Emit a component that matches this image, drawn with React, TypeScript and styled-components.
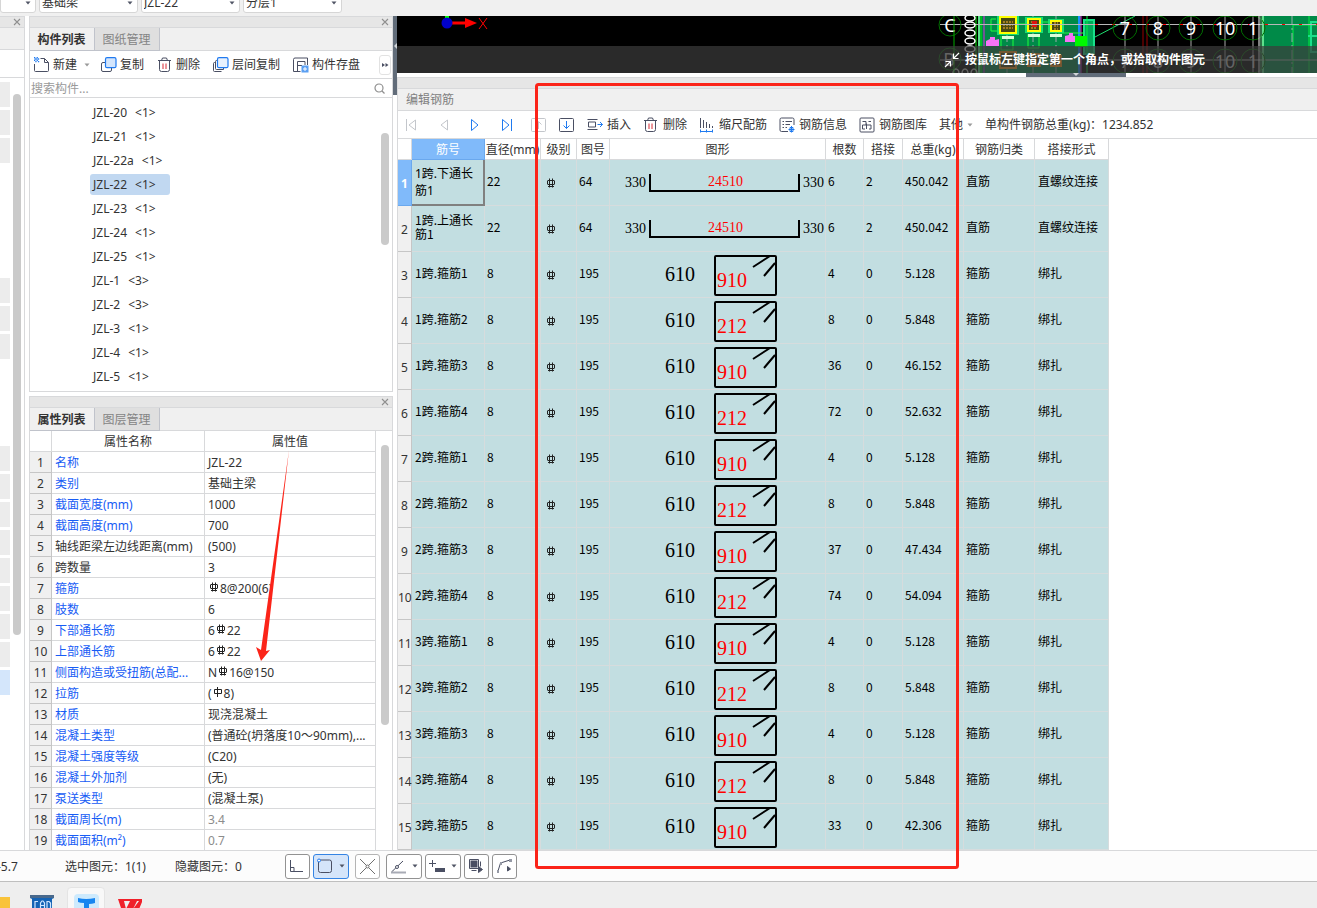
import React from "react";
import styled, { createGlobalStyle, css } from "styled-components";

const UI = `"Noto Sans", "Noto Sans CJK SC", sans-serif`;
const CJK = `"Noto Sans CJK SC", sans-serif`;
const INK = "#4a4f63";
const BLUE = "#1f7af0";
const LINE = "#d8d9db";

const GlobalStyle = createGlobalStyle`
  *, *::before, *::after { box-sizing: border-box; }
  body { margin: 0; background: #fff; color: #333; font: 12px/16px ${UI}; }
  button, input, select { font: inherit; color: inherit; }
  svg { display: block; flex: none; }
`;

const Page = styled.div`
  position: relative;
  display: flex;
  flex-direction: column;
  min-height: 100vh;
  overflow: hidden;
`;

/* ---------- top selectors ---------- */

const TopBar = styled.header`
  display: flex;
  align-items: flex-end;
  gap: 3px;
  height: 16px;
  padding-bottom: 3px;
  background: #f0f0f0;
  overflow: hidden;
`;

const Combo = styled.label<{ $width: number }>`
  display: flex;
  align-items: center;
  flex: none;
  width: ${(p) => p.$width}px;
  height: 22px;
  padding: 2px 4px 0 0;
  background: #fff;
  border: 1px solid #d6d6d6;
  border-radius: 3px;
`;

const ComboSelect = styled.select`
  appearance: none;
  flex: 1;
  min-width: 0;
  height: 20px;
  padding: 0 0 0 2px;
  border: 0;
  background: none;
  line-height: 20px;
`;

/* ---------- main columns ---------- */

const Main = styled.main`
  display: flex;
  align-items: stretch;
  flex: 1;
`;

const Strip = styled.aside`
  display: flex;
  flex-direction: column;
  flex: none;
  width: 25px;
  border-right: 1px solid ${LINE};
`;

const StripHead = styled.div<{ $tall?: boolean }>`
  height: ${(p) => (p.$tall ? 28 : 22)}px;
  background: ${(p) => (p.$tall ? "#fff" : "#f0f0f0")};
  border-bottom: 1px solid ${LINE};
`;

const StripBody = styled.div`
  display: flex;
  justify-content: space-between;
  padding: 4px 3px 0 0;
`;

const StripList = styled.div`
  display: flex;
  flex-direction: column;
  gap: 3px;
`;

const StripItem = styled.div<{ $kind: number }>`
  width: 10px;
  height: 25px;
  background: ${(p) => ["transparent", "#ececec", "#d4e6fb"][p.$kind]};
`;

const Thumb = styled.div<{ $top: number; $length: number }>`
  flex: none;
  width: 8px;
  height: ${(p) => p.$length}px;
  margin-top: ${(p) => p.$top}px;
  border-radius: 4px;
  background: #cacaca;
`;

const Sidebar = styled.div`
  display: flex;
  flex-direction: column;
  gap: 4px;
  flex: none;
  width: 364px;
  margin-left: 4px;
`;

const Panel = styled.section<{ $closed?: boolean }>`
  display: flex;
  flex-direction: column;
  border: 1px solid ${LINE};
  border-top: 0;
  border-bottom-width: ${(p) => (p.$closed ? 1 : 0)}px;
`;

const Caption = styled.div`
  display: flex;
  align-items: center;
  justify-content: flex-end;
  height: 12px;
  padding-right: 3px;
  background: #e6e6e6;
  border-top: 1px solid ${LINE};
  border-bottom: 1px solid ${LINE};
`;

const CloseButton = styled.button`
  padding: 0;
  border: 0;
  background: none;
`;

const Tabs = styled.div`
  display: flex;
  height: 23px;
  background: #f0f0f0;
  border-bottom: 1px solid ${LINE};
`;

const Tab = styled.button<{ $active?: boolean }>`
  width: 65px;
  height: 23px;
  padding: 2px 1px 0 0;
  border: 1px solid #c0c3cb;
  border-left-width: ${(p) => (p.$active ? 0 : 0)}px;
  border-top: 0;
  background: ${(p) => (p.$active ? "#f0f0f0" : "#dfdfdf")};
  color: ${(p) => (p.$active ? "#333" : "#848484")};
  font-weight: ${(p) => (p.$active ? 700 : 400)};
`;

const ListTools = styled.div`
  display: flex;
  align-items: center;
  gap: 13px;
  height: 28px;
  padding: 1px 0 0 4px;
  border-bottom: 1px solid ${LINE};
`;

const Tool = styled.button<{ $gap: number }>`
  display: flex;
  align-items: center;
  gap: ${(p) => p.$gap}px;
  flex: none;
  padding: 0;
  border: 0;
  background: none;
  line-height: 20px;
  white-space: nowrap;
`;

const NewGroup = styled.div`
  display: flex;
  align-items: center;
  gap: 7px;
  margin-right: -2px;
`;

const More = styled.button`
  display: flex;
  align-items: center;
  justify-content: center;
  flex: none;
  width: 12px;
  height: 20px;
  margin: 0 1px 0 auto;
  padding: 0;
  border: 1px solid #e2e2e2;
  border-radius: 3px;
  background: #fff;
`;

const SearchRow = styled.label`
  display: flex;
  align-items: center;
  height: 19px;
  padding: 0 7px 0 1px;
  border-bottom: 1px solid ${LINE};
`;

const SearchInput = styled.input`
  flex: 1;
  min-width: 0;
  height: 18px;
  padding: 0;
  border: 0;
  outline: 0;
  background: none;
  &::placeholder { color: #9a9a9a; opacity: 1; }
`;

const ListBody = styled.div`
  display: flex;
  justify-content: space-between;
  height: 293px;
  padding-right: 3px;
`;

const ComponentList = styled.ul`
  display: flex;
  flex-direction: column;
  gap: 3px;
  margin: 0;
  padding: 4px 0 0 60px;
  list-style: none;
`;

const ComponentItem = styled.button<{ $selected: boolean }>`
  display: flex;
  gap: 8px;
  min-width: 80px;
  height: 21px;
  padding: 0 3px;
  border: 0;
  border-radius: 3px;
  background: ${(p) => (p.$selected ? "#c1d8f1" : "transparent")};
  line-height: 21px;
  white-space: nowrap;
`;

/* ---------- properties ---------- */

const PropBody = styled.div`
  display: flex;
  justify-content: space-between;
  padding-right: 3px;
`;

const PropTable = styled.table`
  width: 346px;
  table-layout: fixed;
  border-collapse: separate;
  border-spacing: 0;
  th, td {
    height: 21px;
    padding: 2px 3px 0;
    border-right: 1px solid ${LINE};
    border-bottom: 1px solid ${LINE};
    font-weight: 400;
    line-height: 18px;
    text-align: left;
    white-space: nowrap;
    overflow: hidden;
  }
  thead th { text-align: center; }
  tbody tr:last-child > * { height: 20px; border-bottom: 0; }
`;

const PropIndex = styled.th`
  && { padding: 2px 0 0; background: #f0f0f0; border-color: #c6c6c6; text-align: center; }
`;

const PropName = styled.td<{ $plain?: boolean }>`
  color: ${(p) => (p.$plain ? "#333" : "#175cf5")};
`;

const PropValue = styled.td<{ $muted?: boolean }>`
  color: ${(p) => (p.$muted ? "#8c8c8c" : "#333")};
`;

const ValueLine = styled.span`
  display: flex;
  align-items: center;
  svg { margin: 0 1px 4px; }
`;

/* ---------- work area ---------- */

const Splitter = styled.div`
  flex: none;
  width: 4px;
`;

const SplitterGrip = styled.div`
  display: flex;
  align-items: center;
  height: 79px;
  padding-bottom: 20px;
  background: #616c79;
`;

const Work = styled.div`
  display: flex;
  flex-direction: column;
  flex: 1;
  min-width: 0;
`;

const Canvas = styled.div`
  position: relative;
  height: 57px;
  background: #000;
  overflow: hidden;
`;

const Hint = styled.div`
  position: absolute;
  inset: 30px 0 0 0;
  display: flex;
  align-items: center;
  gap: 5px;
  padding: 1px 0 0 547px;
  background: rgba(59, 59, 59, 0.71);
  color: #fff;
  font-weight: 700;
  white-space: nowrap;
`;

const Shelf = styled.div`
  height: 4px;
  padding-left: 629px;
`;

const ShelfGrip = styled.div`
  display: flex;
  justify-content: center;
  width: 100px;
  height: 4px;
  background: #616c79;
`;

const Editor = styled.section`
  flex: 1;
  border-left: 1px solid ${LINE};
`;

const EditorTitle = styled.h2`
  margin: 0;
  height: 22px;
  padding-left: 8px;
  background: #f0f0f0;
  border-bottom: 1px solid ${LINE};
  color: #808080;
  font-size: 12px;
  font-weight: 400;
  line-height: 22px;
`;

const EditorTools = styled.div`
  display: flex;
  align-items: center;
  gap: 12px;
  height: 28px;
  padding: 1px 0 0 5px;
  border-bottom: 1px solid ${LINE};
  white-space: nowrap;
`;

const NavGroup = styled.div`
  display: flex;
  gap: 16px;
  margin-right: 4px;
`;

const BarTable = styled.table`
  width: 711px;
  table-layout: fixed;
  border-collapse: separate;
  border-spacing: 0;
  color: #000;
`;

const HeadCell = styled.th<{ $current?: boolean }>`
  height: 21px;
  padding: 2px 0 0;
  border-right: 1px solid ${LINE};
  border-bottom: 1px solid ${LINE};
  background: #fff;
  color: #333;
  font-weight: 400;
  line-height: 18px;
  text-align: center;
  white-space: nowrap;
  ${(p) =>
    p.$current &&
    css`
      background: #80bafa;
      border-color: #6aa8ee;
      color: #fff;
    `}
`;

const RowHead = styled.th<{ $current?: boolean }>`
  height: 46px;
  padding: 2px 0 0;
  border-right: 1px solid #c6c6c6;
  border-bottom: 1px solid #c6c6c6;
  background: #f0f0f0;
  color: #333;
  font-weight: 400;
  text-align: center;
  white-space: nowrap;
  ${(p) =>
    p.$current &&
    css`
      background: #80bafa;
      border-color: #6aa8ee;
      color: #fff;
      font-weight: 700;
    `}
`;

const Cell = styled.td<{ $pad?: number; $current?: boolean }>`
  height: 46px;
  padding: 0 0 3px ${(p) => p.$pad ?? 2}px;
  border-right: 1px solid #d6dcdd;
  border-bottom: 1px solid #d6dcdd;
  background: #c2dee1;
  font-family: ${CJK};
  line-height: 14px;
  ${(p) =>
    p.$current &&
    css`
      border-right: 2px solid #808080;
      border-bottom: 2px solid #808080;
      padding-bottom: 1px;
      font-family: ${UI};
      line-height: 17px;
    `}
`;

const ShapeCell = styled(Cell)`
  padding: 0;
`;

const MarkCell = styled(Cell)`
  padding: 0 0 0 5px;
`;

const ShapeText = styled.text<{ $size: number; $red?: boolean }>`
  font-family: "Liberation Serif", serif;
  font-size: ${(p) => p.$size}px;
  fill: ${(p) => (p.$red ? "#f00" : "#000")};
`;

/* ---------- status and task bars ---------- */

const StatusBar = styled.footer`
  display: flex;
  align-items: center;
  height: 32px;
  background: #fcfcfc;
  border-top: 1px solid ${LINE};
  border-bottom: 1px solid #bfbfbf;
`;

const StatusText = styled.span<{ $width: number }>`
  flex: none;
  width: ${(p) => p.$width}px;
  padding-top: 2px;
  white-space: nowrap;
`;

const Coordinate = styled(StatusText)`
  margin-left: -3px;
`;

const StatusGroup = styled.div`
  display: flex;
  gap: 3px;
  margin-right: 6px;
`;

const StatusButton = styled.button<{ $wide?: boolean; $active?: boolean; $faint?: boolean }>`
  display: flex;
  align-items: center;
  justify-content: space-between;
  width: ${(p) => (p.$wide ? 36 : 25)}px;
  height: 25px;
  padding: 0 3px;
  border: 1px solid ${(p) => (p.$active ? "#3584e4" : p.$faint ? "#b4b4b4" : "#929292")};
  border-radius: 3px;
  background: ${(p) => (p.$active ? "#d5e5fa" : "#fff")};
`;

const TaskBar = styled.nav`
  display: flex;
  height: 26px;
  background: #eeeeee;
  overflow: hidden;
`;

const TaskItem = styled.button<{ $width: number; $active?: boolean }>`
  display: flex;
  align-items: flex-start;
  flex: none;
  width: ${(p) => p.$width}px;
  height: 40px;
  margin-top: 5px;
  padding: 0;
  border: ${(p) => (p.$active ? "1px solid #e4e4e4" : "0")};
  border-radius: 4px;
  background: ${(p) => (p.$active ? "#f8f8f8" : "none")};
`;

const CadLabel = styled.text<{ $dim?: boolean }>`
  font-family: "Noto Sans", sans-serif;
  font-size: 18px;
  text-anchor: middle;
  fill: ${(p) => (p.$dim ? "#c8c8c8" : "#fff")};
`;

const Notes = styled.svg`
  position: absolute;
  left: 0;
  top: 0;
  pointer-events: none;
`;

/* ---------- icons ---------- */

const Caret = ({ color = "#505565" }: { color?: string }) => (
  <svg width="6" height="4" viewBox="0 0 6 4">
    <path d="M0.5 0.5h5L3 3.5z" fill={color} />
  </svg>
);

const CloseIcon = () => (
  <svg width="8" height="8" viewBox="0 0 8 8">
    <path d="M1 1l6 6M7 1L1 7" stroke="#8f8f8f" strokeWidth="1.1" />
  </svg>
);

type IconName =
  | "new" | "copy" | "trash" | "layerCopy" | "save"
  | "first" | "prev" | "next" | "last" | "up" | "down"
  | "insert" | "scale" | "info" | "library";

const glyphs: Record<IconName, React.ReactNode> = {
  new: (
    <>
      <path d="M6.500 1.500h4l4 4v8a1 1 0 0 1-1 1h-12a1 1 0 0 1-1-1V7" />
      <path d="M10.500 1.500v4h4" />
      <path d="M0 .7h1.300M2.600 .7h1.300M1.300 2h1.300M3.900 2h1.300M0 3.300h1.300M2.600 3.300h1.300M1.300 4.600h1.300M3.900 4.600h1.300" stroke={BLUE} strokeWidth="1.400" />
    </>
  ),
  copy: (
    <>
      <path d="M4.500 5.500H2A1.500 1.500 0 0 0 .5 7v6A1.500 1.500 0 0 0 2 14.500h7a1.500 1.500 0 0 0 1.500-1.500v-2" />
      <rect x="4.500" y=".7" width="10.500" height="10" rx="1.500" fill="#d3e5fc" stroke={BLUE} strokeWidth="1.200" />
    </>
  ),
  trash: (
    <>
      <path d="M1 3.500h13M4.500 3.500l1-2.500h4l1 2.500M2.500 4v8.500a2 2 0 0 0 2 2h6a2 2 0 0 0 2-2V4" />
      <path d="M6 6.500v5.500M9 6.500v5.500" stroke="#d82b35" />
    </>
  ),
  layerCopy: (
    <>
      <path d="M2.500 5.500H1.500a1 1 0 0 0-1 1v7a1 1 0 0 0 1 1h7M4.500 3.500h-1a1 1 0 0 0-1 1v7a1 1 0 0 0 1 1h7v-1.500" />
      <rect x="4.500" y=".7" width="10.500" height="10" rx="1.500" fill="#e8f1fd" stroke={BLUE} strokeWidth="1.200" />
    </>
  ),
  save: (
    <>
      <path d="M7.500 14.500H.5V2.500A1.500 1.500 0 0 1 2 1h12.500v7M4.500 14V4.500H12V8M4.500 8.500H9" />
      <rect x="8.500" y="8.500" width="7" height="7" fill="#5b9ff2" stroke="none" />
      <path d="M12 10v4M10 12h4" stroke="#fff" />
    </>
  ),
  first: <path d="M3.500 2v12M12.500 3v10L6 8z" stroke="#c3c6cb" />,
  prev: <path d="M12.500 3v10L6 8z" stroke="#c3c6cb" />,
  next: <path d="M4.500 2.500v11L11 8z" stroke={BLUE} />,
  last: <path d="M3.500 2.500v11L10 8zM12.500 2v12" stroke={BLUE} />,
  up: (
    <>
      <rect x=".5" y="1.500" width="14" height="13" rx="1" stroke="#c3c6cb" />
      <path d="M7.500 12V5M4.500 7.500l3-3 3 3" stroke="#c3c6cb" />
    </>
  ),
  down: (
    <>
      <rect x=".5" y="1.500" width="14" height="13" rx="1" />
      <path d="M7.500 4v7.500M4.500 8.500l3 3 3-3" stroke={BLUE} />
    </>
  ),
  insert: (
    <>
      <path d="M.5 2.500h10M.5 12.500h10M1.500 5h7v5h-7z" />
      <path d="M10.500 7.500h5M13 5l2.500 2.500L13 10" stroke={BLUE} />
    </>
  ),
  scale: (
    <>
      <path d="M1.500 1v10M4.500 3v8M7.500 5v6M10.500 7v4M13.500 9v2" />
      <path d="M1 14.500h13M1.500 12.500v3M7.500 12.500v3M13.500 12.500v3" stroke={BLUE} />
    </>
  ),
  info: (
    <>
      <path d="M9 14.500H2.500a1.500 1.500 0 0 1-1.500-1.500V2.500A1.500 1.500 0 0 1 2.500 1h11A1.500 1.500 0 0 1 15 2.500V8M3.500 4.500H5M6.500 4.500H13M3.500 7.500H5M6.500 7.500H11M3.500 10.500H5M6.500 10.500H8" />
      <path d="M12.500 9v6.500M9.500 12.500h6M11 10.500h3v4h-3z" stroke={BLUE} />
    </>
  ),
  library: (
    <>
      <rect x="1" y="1" width="14" height="14" rx="1" />
      <path d="M3.500 4.500H7v3.500H3.500v4H6M7.500 12V6.500M7.500 8h4.500v4h-2M9.500 4.500H12" />
    </>
  ),
};

const Icon = ({ name }: { name: IconName }) => (
  <svg width="16" height="16" viewBox="0 0 16 16" fill="none" stroke={INK} strokeWidth="1">
    {glyphs[name]}
  </svg>
);

/* Steel grade mark: a ring crossed by uprights, with a base bar for ribbed steel. */
const GradeMark = ({ plain }: { plain?: boolean }) => (
  <svg width="10" height="10" viewBox="0 0 10 10" fill="none" stroke="#222" strokeWidth="1">
    {plain ? (
      <path d="M1.500 2.500h7v4h-7zM4.500 0v10" />
    ) : (
      <path d="M2 2.500h6M1.500 2.500v4M8.500 2.500v4M2 6.500h6M3.500 .5v9M6.500 .5v9M2 8.500h6" />
    )}
  </svg>
);

/* ---------- data ---------- */

const stripRows = [1, 1, 1, 0, 0, 0, 0, 1, 1, 1, 0, 0, 0, 1, 1, 1, 1, 1, 1, 1, 1, 2];

const components: [string, number][] = [
  ["JZL-20", 1], ["JZL-21", 1], ["JZL-22a", 1], ["JZL-22", 1], ["JZL-23", 1], ["JZL-24", 1],
  ["JZL-25", 1], ["JZL-1", 3], ["JZL-2", 3], ["JZL-3", 1], ["JZL-4", 1], ["JZL-5", 1],
];

type Prop = { name: string; value: React.ReactNode; plain?: boolean; muted?: boolean };

const props: Prop[] = [
  { name: "名称", value: "JZL-22" },
  { name: "类别", value: "基础主梁" },
  { name: "截面宽度(mm)", value: "1000" },
  { name: "截面高度(mm)", value: "700" },
  { name: "轴线距梁左边线距离(mm)", value: "(500)", plain: true },
  { name: "跨数量", value: "3", plain: true },
  { name: "箍筋", value: <><GradeMark />8@200(6)</> },
  { name: "肢数", value: "6" },
  { name: "下部通长筋", value: <>6<GradeMark />22</> },
  { name: "上部通长筋", value: <>6<GradeMark />22</> },
  { name: "侧面构造或受扭筋(总配...", value: <>N<GradeMark />16@150</> },
  { name: "拉筋", value: <>(<GradeMark plain />8)</> },
  { name: "材质", value: "现浇混凝土" },
  { name: "混凝土类型", value: "(普通砼(坍落度10～90mm),..." },
  { name: "混凝土强度等级", value: "(C20)" },
  { name: "混凝土外加剂", value: "(无)" },
  { name: "泵送类型", value: "(混凝土泵)" },
  { name: "截面周长(m)", value: "3.4", muted: true },
  { name: "截面面积(m²)", value: "0.7", muted: true },
];

type Bar = { name: string; dia: string; no: string; size: string; count: string; lap: string; weight: string };

const mainBar = (name: string): Bar => ({
  name, dia: "22", no: "64", size: "24510", count: "6", lap: "2", weight: "450.042",
});
const stirrup = (name: string, size: string, count: string, weight: string): Bar => ({
  name, dia: "8", no: "195", size, count, lap: "0", weight,
});

const bars: Bar[] = [
  mainBar("1跨.下通长筋1"),
  mainBar("1跨.上通长筋1"),
  stirrup("1跨.箍筋1", "910", "4", "5.128"),
  stirrup("1跨.箍筋2", "212", "8", "5.848"),
  stirrup("1跨.箍筋3", "910", "36", "46.152"),
  stirrup("1跨.箍筋4", "212", "72", "52.632"),
  stirrup("2跨.箍筋1", "910", "4", "5.128"),
  stirrup("2跨.箍筋2", "212", "8", "5.848"),
  stirrup("2跨.箍筋3", "910", "37", "47.434"),
  stirrup("2跨.箍筋4", "212", "74", "54.094"),
  stirrup("3跨.箍筋1", "910", "4", "5.128"),
  stirrup("3跨.箍筋2", "212", "8", "5.848"),
  stirrup("3跨.箍筋3", "910", "4", "5.128"),
  stirrup("3跨.箍筋4", "212", "8", "5.848"),
  stirrup("3跨.箍筋5", "910", "33", "42.306"),
];

const columns = ["直径(mm)", "级别", "图号", "图形", "根数", "搭接", "总重(kg)", "钢筋归类", "搭接形式"];
const columnWidths = [14, 73, 56, 36, 33, 216, 38, 39, 61, 71, 74];

/* ---------- drawings ---------- */

const StraightShape = ({ size }: { size: string }) => (
  <svg width="215" height="45" viewBox="0 0 215 45">
    <path d="M40 14v17h149V14" fill="none" stroke="#000" strokeWidth="2" />
    <ShapeText $size={14} x="15" y="27">330</ShapeText>
    <ShapeText $size={14} x="193" y="27">330</ShapeText>
    <ShapeText $size={14} $red x="98" y="26">{size}</ShapeText>
  </svg>
);

const StirrupShape = ({ size }: { size: string }) => (
  <svg width="215" height="45" viewBox="0 0 215 45">
    <rect x="105" y="4" width="61" height="39" rx="1" fill="none" stroke="#000" strokeWidth="2" />
    <path d="M143 15l17-11M154 24l11-13" stroke="#000" strokeWidth="2" />
    <ShapeText $size={20} x="55" y="29">610</ShapeText>
    <ShapeText $size={20} $red x="107" y="35">{size}</ShapeText>
  </svg>
);

const axes = [
  { x: 1125, label: "7" }, { x: 1158, label: "8" }, { x: 1191, label: "9" }, { x: 1225, label: "10" }, { x: 1253, label: "1" },
];

const Plan = () => (
  <svg width="920" height="57" viewBox="397 16 920 57" fill="none">
    <path d="M447 12v6" stroke="#0f0" strokeWidth="4" />
    <path d="M450 23h18" stroke="#f00" strokeWidth="3" />
    <path d="M465 18l12 5-12 5z" fill="#f00" />
    <circle cx="447" cy="23" r="5.500" fill="#00c" />
    <path d="M479 18l8 11M487 18l-8 11" stroke="#f00" />

    <rect x="978" y="16" width="103" height="57" fill="#008a48" />
    <rect x="1262" y="16" width="55" height="57" fill="#008a48" />
    <path d="M976 16v57M981 16v57" stroke="#0e0" strokeWidth="1" />
    <path d="M979 16v57M1263 16v57" stroke="#5ee08c" strokeWidth="2" />
    <path d="M984 16v57M1081 16v57" stroke="#e020e0" />
    <path d="M1079 16v57" stroke="#1890ff" strokeWidth="2" />
    <path d="M1084 20h10v34h-10z" fill="#00a858" stroke="#19e08a" strokeWidth="2" />
    <path d="M1087 16v57M1317 25h-24v48M1309 16v57" stroke="#00f040" />
    <path d="M1308 36h9M1311 22h7v30h-7z" stroke="#19e08a" strokeWidth="2" />
    <path d="M1143 16v57M1147 16v57" stroke="#900" />
    <path d="M1095 37l40-21" stroke="#1ee070" />
    <path d="M1007 16v57M1033 16v57M1056 16v57M1292 16v57" stroke="#9aa" strokeDasharray="9 3 2 3" />
    <path d="M991 24v-5h5M991 24v7h13M1018 24h8v8M1042 22h8v9M1058 33h26M1001 36v14h12V36M1028 34v14h11V34M996 60h60" stroke="#1eff3c" />

    {[[1008, 25, 8], [1034, 25, 6], [1056, 26, 5]].map(([x, y, r]) => (
      <g key={x}>
        <rect x={x - r - 3} y={y - r - 2} width={2 * r + 6} height={2 * r + 4} fill="#19e070" />
        <rect x={x - r} y={y - r} width={2 * r} height={2 * r} fill="#494a12" stroke="#ff0" strokeWidth="2" />
        <path d={`M${x - r + 3} ${y - 3}h${2 * r - 6}M${x - r + 3} ${y}h${2 * r - 6}M${x - r + 3} ${y + 3}h${2 * r - 6}`} stroke="#ffb030" strokeDasharray="2 1" />
        <rect x={x - 6} y={y + r + 3} width="12" height="3" fill="#d8ffd8" />
        <rect x={x - r} y={y + 35 - r} width={2 * r} height={2 * r} fill="#494a12" stroke="#ff9a1e" strokeWidth="2" />
      </g>
    ))}
    <path d="M1032 21h5v6h-5z" fill="#e01010" />
    <path d="M986 46v-5l4-2v-2h5v3l4-1v7zM1065 42v-6l4-1v-2h4v3h5v6z" fill="#f573f5" />
    <path d="M1075 36h12v11h-12z" fill="#00f800" />

    <path d="M940 24.500h377M1088 60h229M940 60h40" stroke="#b8b8b8" />
    <path d="M1095 24.500h222" stroke="#f00" strokeDasharray="3 14" />
    {axes.map((a) => (
      <g key={a.x}>
        <path d={`M${a.x} 16v57`} stroke="#a8a8a8" />
        <circle cx={a.x} cy="28" r="12" stroke="#006c00" />
        <circle cx={a.x} cy="61" r="12" stroke="#006c00" />
        <CadLabel x={a.x} y="35">{a.label}</CadLabel>
        <CadLabel $dim x={a.x} y="68">{a.label}</CadLabel>
      </g>
    ))}
    <path d="M1259 16v57" stroke="#fff" />
    <path d="M1261 16v57" stroke="#5ee08c" />
    <circle cx="950" cy="25" r="11" stroke="#006c00" />
    <circle cx="950" cy="59" r="11" stroke="#006c00" />
    <CadLabel x="950" y="32">C</CadLabel>
    <CadLabel $dim x="949" y="66">B</CadLabel>
    {[18, 25, 33, 41, 49].map((y) => (
      <ellipse key={y} cx="970" cy={y} rx="5" ry="3" stroke="#fff" strokeWidth="1.500" />
    ))}
    {[956, 965, 974].map((x) => (
      <ellipse key={x} cx={x} cy="74" rx="3" ry="5" stroke="#c8c8c8" strokeWidth="1.500" />
    ))}
    <path d="M954 16v57" stroke="#0a0" />
  </svg>
);

/* ---------- page ---------- */

const EDITOR_GAP = 4;
const LIST_GAP = 3;

export default function App() {
  return (
    <>
      <GlobalStyle />
      <Page>
        <TopBar>
          {[["", 36], ["基础梁", 99], ["JZL-22", 99], ["分层1", 99]].map(([text, width]) => (
            <Combo key={text} $width={width as number}>
              <ComboSelect aria-label={(text as string) || "楼层"}>
                <option>{text}</option>
              </ComboSelect>
              <Caret />
            </Combo>
          ))}
        </TopBar>

        <Main>
          <Strip>
            <Caption>
              <CloseButton aria-label="关闭"><CloseIcon /></CloseButton>
            </Caption>
            <StripHead />
            <StripHead $tall />
            <StripBody>
              <StripList>
                {stripRows.map((kind, i) => <StripItem key={i} $kind={kind} />)}
              </StripList>
              <Thumb $top={12} $length={541} />
            </StripBody>
          </Strip>

          <Sidebar>
            <Panel $closed>
              <Caption>
                <CloseButton aria-label="关闭"><CloseIcon /></CloseButton>
              </Caption>
              <Tabs role="tablist">
                <Tab role="tab" aria-selected $active>构件列表</Tab>
                <Tab role="tab" aria-selected={false}>图纸管理</Tab>
              </Tabs>
              <ListTools>
                <NewGroup>
                  <Tool $gap={LIST_GAP}><Icon name="new" />新建</Tool>
                  <Caret color="#9a9a9a" />
                </NewGroup>
                <Tool $gap={LIST_GAP}><Icon name="copy" />复制</Tool>
                <Tool $gap={LIST_GAP}><Icon name="trash" />删除</Tool>
                <Tool $gap={LIST_GAP}><Icon name="layerCopy" />层间复制</Tool>
                <Tool $gap={LIST_GAP}><Icon name="save" />构件存盘</Tool>
                <More aria-label="更多">
                  <svg width="8" height="6" viewBox="0 0 8 6" fill="#4a4f63">
                    <path d="M1 1l3 2-3 2zM4.500 1l3 2-3 2z" />
                  </svg>
                </More>
              </ListTools>
              <SearchRow>
                <SearchInput type="text" placeholder="搜索构件..." aria-label="搜索构件" />
                <svg width="11" height="11" viewBox="0 0 11 11" fill="none" stroke="#8f8f8f" strokeWidth="1.200">
                  <circle cx="5" cy="5" r="4" />
                  <path d="M8 8l2.500 2.500" />
                </svg>
              </SearchRow>
              <ListBody>
                <ComponentList>
                  {components.map(([name, count]) => (
                    <li key={name}>
                      <ComponentItem $selected={name === "JZL-22"}>
                        <span>{name}</span>
                        <span>{`<${count}>`}</span>
                      </ComponentItem>
                    </li>
                  ))}
                </ComponentList>
                <Thumb $top={35} $length={112} />
              </ListBody>
            </Panel>

            <Panel>
              <Caption>
                <CloseButton aria-label="关闭"><CloseIcon /></CloseButton>
              </Caption>
              <Tabs role="tablist">
                <Tab role="tab" aria-selected $active>属性列表</Tab>
                <Tab role="tab" aria-selected={false}>图层管理</Tab>
              </Tabs>
              <PropBody>
                <PropTable>
                  <colgroup>
                    <col style={{ width: 22 }} />
                    <col style={{ width: 153 }} />
                    <col />
                  </colgroup>
                  <thead>
                    <tr><th /><th>属性名称</th><th>属性值</th></tr>
                  </thead>
                  <tbody>
                    {props.map((p, i) => (
                      <tr key={p.name}>
                        <PropIndex scope="row">{i + 1}</PropIndex>
                        <PropName $plain={p.plain}>{p.name}</PropName>
                        <PropValue $muted={p.muted}><ValueLine>{p.value}</ValueLine></PropValue>
                      </tr>
                    ))}
                  </tbody>
                </PropTable>
                <Thumb $top={14} $length={280} />
              </PropBody>
            </Panel>
          </Sidebar>

          <Splitter>
            <SplitterGrip>
              <svg width="4" height="6" viewBox="0 0 4 6"><path d="M4 0v6L1 3z" fill="#d0d4d8" /></svg>
            </SplitterGrip>
          </Splitter>

          <Work>
            <Canvas>
              <Plan />
              <Hint>
                <svg width="16" height="16" viewBox="0 0 16 16" fill="none" stroke="#fff" strokeWidth="1.200">
                  <path d="M15 1l-5.500 5.500M9.500 1.500v5h5M1 15l5.500-5.500M1.500 9.500h5v5" />
                </svg>
                按鼠标左键指定第一个角点，或拾取构件图元
              </Hint>
            </Canvas>
            <Shelf>
              <ShelfGrip>
                <svg width="6" height="4" viewBox="0 0 6 4"><path d="M0 0h6L3 3z" fill="#d0d4d8" /></svg>
              </ShelfGrip>
            </Shelf>

            <Editor>
              <Caption />
              <EditorTitle>编辑钢筋</EditorTitle>
              <EditorTools>
                <NavGroup>
                  <Tool $gap={0} aria-label="首行"><Icon name="first" /></Tool>
                  <Tool $gap={0} aria-label="上一行"><Icon name="prev" /></Tool>
                  <Tool $gap={0} aria-label="下一行"><Icon name="next" /></Tool>
                  <Tool $gap={0} aria-label="末行"><Icon name="last" /></Tool>
                </NavGroup>
                <Tool $gap={0} aria-label="上移"><Icon name="up" /></Tool>
                <Tool $gap={0} aria-label="下移"><Icon name="down" /></Tool>
                <Tool $gap={EDITOR_GAP}><Icon name="insert" />插入</Tool>
                <Tool $gap={EDITOR_GAP}><Icon name="trash" />删除</Tool>
                <Tool $gap={EDITOR_GAP}><Icon name="scale" />缩尺配筋</Tool>
                <Tool $gap={EDITOR_GAP}><Icon name="info" />钢筋信息</Tool>
                <Tool $gap={EDITOR_GAP}><Icon name="library" />钢筋图库</Tool>
                <Tool $gap={EDITOR_GAP}>其他<Caret color="#9a9a9a" /></Tool>
                <span>单构件钢筋总重(kg)：1234.852</span>
              </EditorTools>
              <BarTable>
                <colgroup>
                  {columnWidths.map((w, i) => <col key={i} style={{ width: w }} />)}
                </colgroup>
                <thead>
                  <tr>
                    <HeadCell />
                    <HeadCell $current>筋号</HeadCell>
                    {columns.map((c) => <HeadCell key={c}>{c}</HeadCell>)}
                  </tr>
                </thead>
                <tbody>
                  {bars.map((b, i) => {
                    const straight = b.no === "64";
                    return (
                      <tr key={b.name}>
                        <RowHead scope="row" $current={i === 0}>{i + 1}</RowHead>
                        <Cell $current={i === 0} $pad={3}>{b.name}</Cell>
                        <Cell>{b.dia}</Cell>
                        <MarkCell><GradeMark /></MarkCell>
                        <Cell>{b.no}</Cell>
                        <ShapeCell>
                          {straight ? <StraightShape size={b.size} /> : <StirrupShape size={b.size} />}
                        </ShapeCell>
                        <Cell>{b.count}</Cell>
                        <Cell>{b.lap}</Cell>
                        <Cell>{b.weight}</Cell>
                        <Cell>{straight ? "直筋" : "箍筋"}</Cell>
                        <Cell $pad={3}>{straight ? "直螺纹连接" : "绑扎"}</Cell>
                      </tr>
                    );
                  })}
                </tbody>
              </BarTable>
            </Editor>
          </Work>
        </Main>

        <StatusBar>
          <Coordinate $width={68}>-5.7</Coordinate>
          <StatusText $width={110}>选中图元：1(1)</StatusText>
          <StatusText $width={110}>隐藏图元：0</StatusText>
          <StatusGroup>
            <StatusButton aria-label="正交">
              <svg width="17" height="17" viewBox="0 0 17 17" fill="none" stroke={INK}>
                <path d="M1.500 2v11.500H14M1.500 9.500h3.500v4" />
              </svg>
            </StatusButton>
            <StatusButton $wide $active aria-label="矩形选择">
              <svg width="16" height="17" viewBox="0 0 16 17" fill="none" stroke={INK}>
                <rect x="1.500" y="2" width="13" height="12.500" rx="2" />
                <circle cx="2" cy="2.500" r="1.500" fill="#fff" stroke={BLUE} />
              </svg>
              <Caret />
            </StatusButton>
          </StatusGroup>
          <StatusGroup>
            <StatusButton $faint aria-label="交点">
              <svg width="17" height="17" viewBox="0 0 17 17" fill="none" stroke="#707070">
                <path d="M1 1l15 15M16 1L1 16" />
                <circle cx="8.500" cy="8.500" r="1.500" fill="#fff" />
              </svg>
            </StatusButton>
          </StatusGroup>
          <StatusGroup>
            <StatusButton $wide aria-label="角度">
              <svg width="17" height="17" viewBox="0 0 17 17" fill="none" stroke={INK}>
                <path d="M13 3L1.500 14" />
                <path d="M1 14.500h15" stroke="#a8abb5" strokeWidth="2" />
                <circle cx="7" cy="9" r="1.500" fill="#fff" />
              </svg>
              <Caret />
            </StatusButton>
            <StatusButton $wide aria-label="偏移">
              <svg width="18" height="17" viewBox="0 0 18 17" fill="none" stroke={INK}>
                <path d="M0 5.500h7M3.500 2v7" />
                <rect x="6.500" y="10.500" width="9" height="3" fill={INK} />
              </svg>
              <Caret />
            </StatusButton>
            <StatusButton aria-label="复制选择">
              <svg width="17" height="17" viewBox="0 0 17 17" fill="none" stroke={INK}>
                <path d="M1.500 1.500h9v9h-9zM12.500 3.500v5M3.500 12.500h5" />
                <rect x="3" y="3" width="6" height="6" fill={INK} />
                <path d="M10.500 8.500l4 3-4 3z" fill={INK} />
              </svg>
            </StatusButton>
            <StatusButton aria-label="折线选择">
              <svg width="17" height="17" viewBox="0 0 17 17" fill="none" stroke={INK}>
                <path d="M2 13L4.500 5 14 2" />
                <path d="M1 13.500h2M4 5.500h2M13 2.500h3" stroke="#9599a5" strokeWidth="3" />
                <path d="M11.500 8.500l3 2.500-3 2z" fill={INK} />
              </svg>
            </StatusButton>
          </StatusGroup>
        </StatusBar>

        <TaskBar>
          <TaskItem $width={22} aria-label="文件夹">
            <svg width="10" height="26" viewBox="0 0 10 26">
              <path d="M0 10h10v16H0z" fill="#f9c33a" />
            </svg>
          </TaskItem>
          <TaskItem $width={45} aria-label="CAD">
            <svg width="34" height="26" viewBox="0 0 34 26">
              <path d="M8 8h24v3l-2 1v14H10V12l-2-1z" fill="#1463b5" />
              <path d="M8 8h24v3H8z" fill="#49698c" />
              <path d="M16 14.500h-3v7h3M18.500 22v-6l1.500-2h1l1.500 2v6M18.500 18.500h4M25 14.500h2l1.500 1.500v6H25z" fill="none" stroke="#cfe6ff" strokeWidth="1.200" />
            </svg>
          </TaskItem>
          <TaskItem $width={38} $active aria-label="广联达">
            <svg width="36" height="26" viewBox="0 0 36 26">
              <rect x="6" y="6" width="25" height="25" rx="4" fill="#cdeafd" />
              <path d="M10 10q8 2 17 0v5q-3 1-6 1v12h-5V15q-4 0-6-1z" fill="#1785f0" />
            </svg>
          </TaskItem>
          <TaskItem $width={46} aria-label="WPS">
            <svg width="46" height="26" viewBox="0 0 46 26">
              <path d="M13 12h24v3l-5 12h-5l-3-6-3 6h-3z" fill="#f0202a" />
              <path d="M19 14h6l-4 8zM28 22l4-8h2z" fill="#eee" />
            </svg>
          </TaskItem>
        </TaskBar>

        <Notes width="1000" height="900" viewBox="0 0 1000 900" aria-hidden>
          <rect x="536.500" y="84.500" width="421" height="783" rx="2" fill="none" stroke="#fb2419" strokeWidth="3" />
          <path d="M289 450L266 651l4-1-9 11-5-14 5 3z" fill="#fb2419" />
        </Notes>
      </Page>
    </>
  );
}
